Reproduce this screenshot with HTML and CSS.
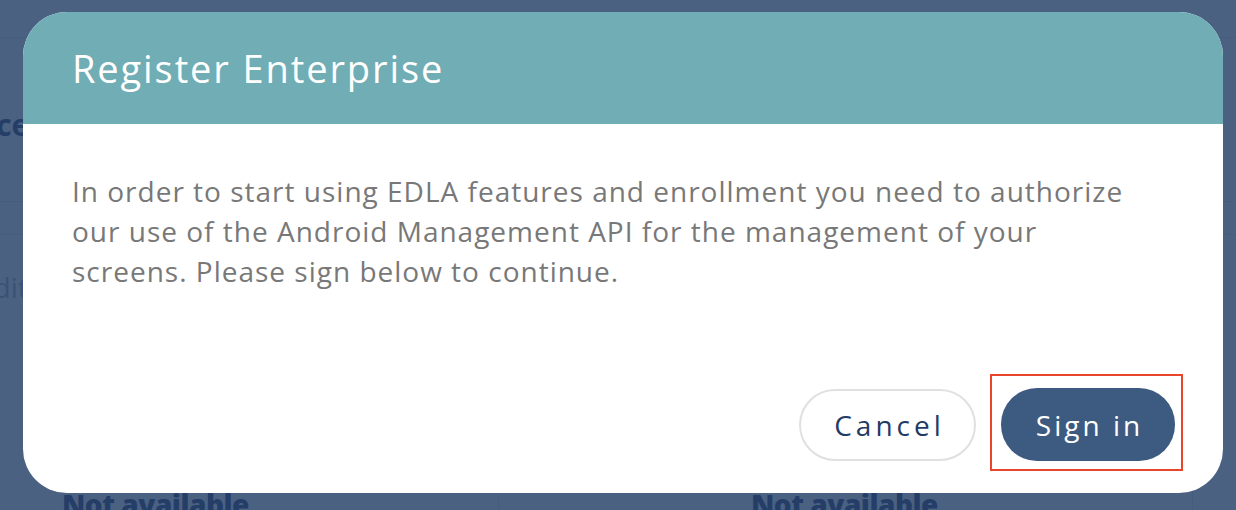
FILE: index.html
```html
<!DOCTYPE html>
<html lang="en">
<head>
    <meta charset="UTF-8">
    <meta name="viewport" content="width=device-width, initial-scale=1.0">
    <title>Register Enterprise</title>
    <link rel="stylesheet" href="styles.css">
</head>
<body>

<div class="page">
    <div class="page-row page-row-top"></div>
    <div class="page-heading">Device</div>
    <div class="page-row page-row-mid"></div>
    <div class="page-row page-row-low"></div>
    <div class="page-sub">Edit</div>
    <div class="page-cards">
        <div class="page-card"><span class="page-status">Not available</span></div>
        <div class="page-card"><span class="page-status">Not available</span></div>
    </div>
</div>

<div class="overlay"></div>

<div class="modal">
    <div class="modal-header">
        <h1>Register Enterprise</h1>
    </div>
    <div class="modal-body">
        <p>In order to start using EDLA features and enrollment you need to authorize our use of the Android Management API for the management of your screens. Please sign below to continue.</p>
        <div class="modal-actions">
            <button class="btn btn-cancel">Cancel</button>
            <button class="btn btn-primary">Sign in</button>
        </div>
    </div>
</div>

</body>
</html>
```

FILE: styles.css
```css
body {
    margin: 0;
    padding: 0;
    width: 1236px;
    height: 510px;
    overflow: hidden;
    font-family: 'Open Sans', 'Noto Sans', sans-serif;
    background-color: #f4f6f9;
    position: relative;
}

/* pagina sotto il modale */
.page {
    height: 100%;
    padding-top: 37px;
    box-sizing: border-box;
}

.page-row {
    border-top: 1px solid #dfe4ec;
}

.page-row-top {
    height: 163px;
}

.page-heading {
    position: absolute;
    top: 104px;
    left: -70px;
    font-size: 30px;
    font-weight: 700;
    color: #1d3a6b;
}

.page-row-mid {
    height: 32px;
}

.page-sub {
    position: absolute;
    top: 268px;
    left: -22px;
    font-size: 28px;
    color: #9aa6b8;
}

.page-cards {
    margin-top: 250px;
    display: flex;
}

.page-card {
    flex: 0 0 auto;
    width: 436px;
    padding-left: 62px;
    border-right: 1px solid #d6dce6;
}

.page-card + .page-card {
    width: 441px;
    padding-left: 252px;
}

.page-status {
    font-size: 28px;
    font-weight: 800;
    color: #1d3a6b;
    letter-spacing: -0.5px;
}

.overlay {
    position: absolute;
    inset: 0;
    background: rgba(38, 64, 104, 0.82);
}

.modal {
    position: absolute;
    top: 12px;
    left: 23px;
    width: 1200px;
    height: 481px;
    background-color: #ffffff;
    border-radius: 44px;
    overflow: hidden;
    display: flex;
    flex-direction: column;
}

.modal-header {
    height: 112px;
    background-color: #70adb4;
    padding: 0 49px;
    display: flex;
    align-items: center;
}

.modal-header h1 {
    margin: 0;
    font-size: 38px;
    font-weight: 500;
    letter-spacing: 1.9px;
    color: #ffffff;
}

.modal-body {
    flex: 1;
    padding: 47px 48px 32px 49px;
    display: flex;
    flex-direction: column;
}

.modal-body p {
    margin: 0;
    font-size: 28px;
    line-height: 40px;
    letter-spacing: 1px;
    color: #787878;
    max-width: 1068px;
}

.modal-actions {
    margin-top: auto;
    display: flex;
    justify-content: flex-end;
    align-items: center;
    gap: 25px;
}

.btn {
    height: 72px;
    padding: 0;
    border-radius: 36px;
    font-family: inherit;
    font-size: 28px;
    letter-spacing: 4px;
    text-indent: 4px;
    cursor: pointer;
}

.btn-cancel {
    width: 177px;
    background-color: #ffffff;
    border: 2px solid #e0e0e0;
    color: #1f3b66;
}

.btn-primary {
    width: 174px;
    height: 73px;
    letter-spacing: 3px;
    text-indent: 3px;
    background-color: #3d5a80;
    border: none;
    color: #ffffff;
    position: relative;
}

/* riquadro rosso di evidenziazione */
.btn-primary::after {
    content: "";
    position: absolute;
    top: -14px;
    bottom: -10px;
    left: -11px;
    right: -8px;
    border: 2px solid #e8452c;
}
```
